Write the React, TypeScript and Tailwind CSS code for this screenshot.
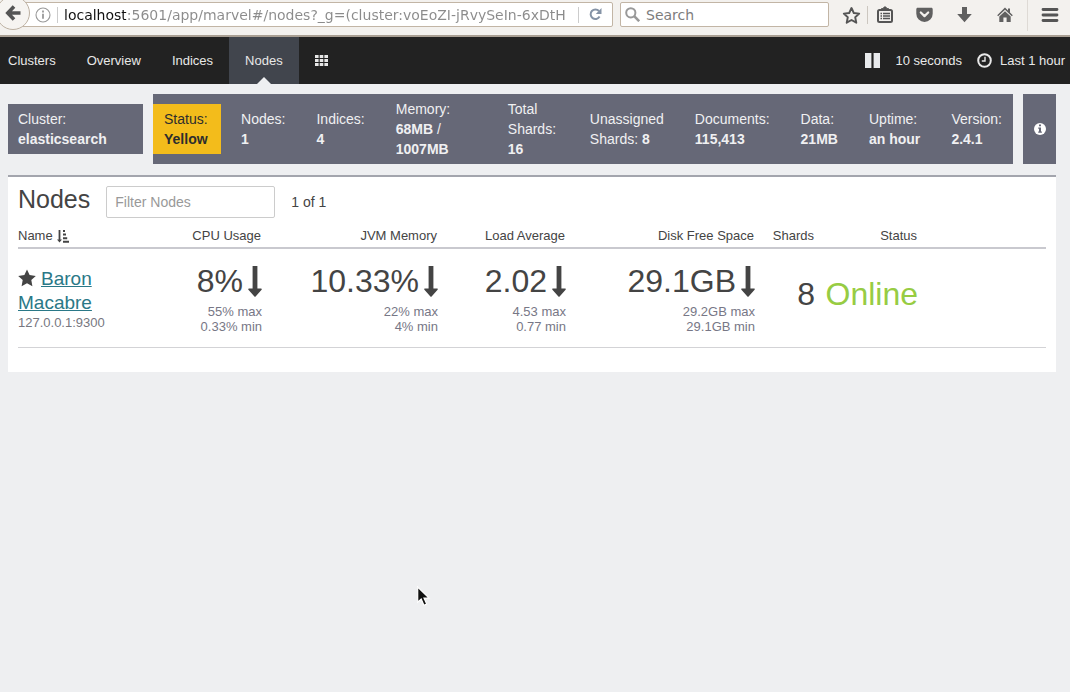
import { useState } from "react";
import type { ReactNode } from "react";

interface Stat {
  name: string;
  lines: ReactNode[];
  width?: string;
}

interface Metric {
  value: string;
  max: string;
  min: string;
}

const stats: Stat[] = [
  { name: "nodes", lines: ["Nodes:", <b>1</b>] },
  { name: "indices", lines: ["Indices:", <b>4</b>] },
  { name: "memory", lines: ["Memory:", <><b>68MB</b> /</>, <b>1007MB</b>], width: "w-[103px]" },
  { name: "total", lines: ["Total", "Shards:", <b>16</b>], width: "w-[73px]" },
  { name: "unassigned", lines: ["Unassigned", <>Shards: <b>8</b></>] },
  { name: "documents", lines: ["Documents:", <b>115,413</b>] },
  { name: "data", lines: ["Data:", <b>21MB</b>] },
  { name: "uptime", lines: ["Uptime:", <b>an hour</b>] },
  { name: "version", lines: ["Version:", <b>2.4.1</b>] },
];

const metrics: Metric[] = [
  { value: "8%", max: "55% max", min: "0.33% min" },
  { value: "10.33%", max: "22% max", min: "4% min" },
  { value: "2.02", max: "4.53 max", min: "0.77 min" },
  { value: "29.1GB", max: "29.2GB max", min: "29.1GB min" },
];

function BrowserBar() {
  const [url, setUrl] = useState("localhost:5601/app/marvel#/nodes?_g=(cluster:voEoZI-jRvySeIn-6xDtH");

  return (
    <div className="flex h-[37px] items-start overflow-hidden border-b-2 border-[#a99f93] bg-[#f3f1ee] font-['DejaVu_Sans',sans-serif] text-sm">
      <button
        aria-label="Back"
        className="relative z-10 -mt-1 -ml-1 flex size-[34px] shrink-0 items-center justify-center rounded-full border border-[#bdb1a2] bg-[#f6f4f1]"
      >
        <svg width="16" height="16" viewBox="0 0 16 16" fill="none" stroke="#555" strokeWidth="3.6">
          <path d="M9 1.5 2.8 8 9 14.5M3 8h12.5" />
        </svg>
      </button>
      <div className="mt-[2px] -ml-2 flex h-[25px] flex-1 items-center rounded-r-xs border border-[#c2b5a5] bg-white pl-3">
        <svg width="16" height="16" viewBox="0 0 16 16" fill="none" stroke="#999" className="shrink-0">
          <circle cx="8" cy="8" r="7" strokeWidth="1.1" />
          <path d="M8 6.8v5M8 3.6v1.8" strokeWidth="1.8" />
        </svg>
        <span className="ml-[6px] h-4 w-px bg-[#ccc]" />
        <input
          aria-label="Address"
          value={url}
          onChange={(e) => setUrl(e.target.value)}
          className="ml-[6px] w-0 min-w-0 flex-1 bg-[linear-gradient(90deg,#111_62px,#8b8b8b_62px)] bg-clip-text text-transparent outline-none"
        />
        <span className="ml-2 h-4 w-px bg-[#ccc]" />
        <button aria-label="Reload" className="mx-[10px] shrink-0">
          <svg width="13" height="13" viewBox="0 0 13 13">
            <path d="M10.6 8.6A4.8 4.8 0 1 1 10 3" fill="none" stroke="#8593a6" strokeWidth="2" />
            <path d="M12.5 0v6H6.8z" fill="#8593a6" />
          </svg>
        </button>
      </div>
      <div className="mt-[2px] ml-[7px] flex h-[25px] w-[209px] items-center rounded-xs border border-[#c2b5a5] bg-white pl-1">
        <svg width="15" height="15" viewBox="0 0 15 15" fill="none" stroke="#999" strokeWidth="2">
          <circle cx="5.8" cy="5.8" r="4.6" />
          <path d="m9.2 9.2 5 5" strokeWidth="2.6" />
        </svg>
        <input aria-label="Search" placeholder="Search" className="ml-[6px] min-w-0 flex-1 outline-none placeholder:text-[#7d7d7d]" />
      </div>
      <div className="flex h-[30px] items-center pl-[13px]">
        <button aria-label="Bookmark">
          <svg width="19" height="19" viewBox="0 0 19 19" fill="none" stroke="#555" strokeWidth="1.9" strokeLinejoin="round">
            <path d="m9.5 2 2.3 5 5.4.6-4 3.7 1.1 5.4-4.8-2.7-4.8 2.7 1.1-5.4-4-3.7 5.4-.6z" />
          </svg>
        </button>
        <span className="ml-[6px] h-[18px] w-px bg-[#ccc7c0]" />
        <button aria-label="Bookmarks list" className="ml-[9px]">
          <svg width="16" height="18" viewBox="0 0 16 18" fill="none" stroke="#555">
            <rect x="1" y="4" width="14" height="12" rx="1.5" strokeWidth="2" />
            <path d="M4.5 4V2.6h2L7 1h2l.5 1.6h2V4z" fill="#555" />
            <path d="M3.5 7.5h1.5M3.5 10h1.5M3.5 12.5h1.5M6 7.5h7M6 10h7M6 12.5h7" strokeWidth="1.3" />
          </svg>
        </button>
        <button aria-label="Pocket" className="ml-[23px]">
          <svg width="17" height="16" viewBox="0 0 17 16">
            <path d="M1.8.8h13.4c1 0 1.5.7 1.5 1.5v4.5a8.2 8.2 0 0 1-16.4 0V2.3C.3 1.5.8.8 1.8.8z" fill="#606060" />
            <path d="m4.8 5.5 3.7 3.6 3.7-3.6" fill="none" stroke="#f3f1ee" strokeWidth="2.2" strokeLinecap="round" strokeLinejoin="round" />
          </svg>
        </button>
        <button aria-label="Downloads" className="ml-6">
          <svg width="15" height="16" viewBox="0 0 15 16" fill="#606060">
            <path d="M5 0h5v7h4.8L7.5 15.2.2 7H5z" />
          </svg>
        </button>
        <button aria-label="Home" className="ml-[25px]">
          <svg width="16" height="16" viewBox="0 0 16 16" fill="#606060">
            <path d="M8 .5 11 3.4V1.5h2v3.9l2.8 2.8-1 1L8 2.7 1.2 9.2l-1-1z" />
            <path d="m8 4.2 5.7 5.4V15H9.6v-4.4H6.4V15H2.3V9.6z" />
          </svg>
        </button>
        <span className="ml-[14px] h-8 w-px bg-[#dedad5]" />
        <button aria-label="Menu" className="mr-[11px] ml-[13px]">
          <svg width="18" height="16" viewBox="0 0 18 16" stroke="#555" strokeWidth="2.8" strokeLinecap="round">
            <path d="M2 2.5h14M2 8h14M2 13.5h14" />
          </svg>
        </button>
      </div>
    </div>
  );
}

function NavBar() {
  return (
    <nav className="flex h-[47px] items-stretch bg-[#222] text-[13px] text-[#e8e8e8]">
      <a href="#clusters" className="flex items-center pr-4 pl-2">Clusters</a>
      <a href="#overview" className="flex items-center pr-4 pl-[15px]">Overview</a>
      <a href="#indices" className="flex items-center pr-4 pl-[15px]">Indices</a>
      <a href="#nodes" className="relative flex items-center bg-[#41454d] px-4">
        Nodes
        <span className="absolute bottom-0 left-1/2 -translate-x-1/2 border-x-[7px] border-b-[7px] border-x-transparent border-b-[#eeeff1]" />
      </a>
      <button aria-label="Applications" className="px-4">
        <svg width="13" height="11" viewBox="0 0 13 11" fill="#e8e8e8">
          <path d="M0 0h3.6v3H0zM4.7 0h3.6v3H4.7zM9.4 0H13v3H9.4zM0 4h3.6v3H0zM4.7 4h3.6v3H4.7zM9.4 4H13v3H9.4zM0 8h3.6v3H0zM4.7 8h3.6v3H4.7zM9.4 8H13v3H9.4z" />
        </svg>
      </button>
      <div className="ml-auto flex items-center pr-[5px]">
        <button aria-label="Pause">
          <svg width="15" height="15" viewBox="0 0 15 15" fill="#e8eaec">
            <path d="M0 0h6.4v15H0zM8.6 0H15v15H8.6z" />
          </svg>
        </button>
        <button className="ml-[15px]">10 seconds</button>
        <button className="ml-[15px] flex items-center gap-2">
          <svg width="15" height="15" viewBox="0 0 15 15" fill="none" stroke="#e8e8e8" strokeWidth="2">
            <circle cx="7.5" cy="7.5" r="6.3" />
            <path d="M8 3.8V8H4.8" strokeWidth="1.4" />
          </svg>
          Last 1 hour
        </button>
      </div>
    </nav>
  );
}

function ClusterStats() {
  return (
    <section className="flex items-center gap-[10px] text-sm leading-5 text-[#f0f0f2]">
      <div className="w-[135px] bg-[#666877] px-[10px] py-[5px]">
        Cluster: <b className="block">elasticsearch</b>
      </div>
      <div className="flex min-h-[70px] flex-1 items-center justify-between bg-[#666877]">
        <div className="w-[68px] bg-[#f3bc1b] py-[5px] pl-[11px] text-[#2d2d2d]">
          Status: <b className="block">Yellow</b>
        </div>
        {stats.map((stat) => (
          <div key={stat.name} className={`px-[11px] py-[5px] whitespace-nowrap ${stat.width ?? ""}`}>
            {stat.lines.map((line, i) => (
              <div key={i}>{line}</div>
            ))}
          </div>
        ))}
      </div>
      <button aria-label="Cluster info" className="flex h-[70px] w-[33px] items-center justify-center bg-[#666877]">
        <svg width="12" height="12" viewBox="0 0 12 12">
          <circle cx="6" cy="6" r="6" fill="#fff" />
          <path d="M5 1.6h2v1.6H5zM4.2 4.4H7v4h.9v1.4H4.2V8.4H5V5.8h-.8z" fill="#666877" />
        </svg>
      </button>
    </section>
  );
}

function DownArrow() {
  return (
    <svg width="14" height="31" viewBox="0 0 14 31" fill="#444">
      <path d="M4.6 0h4.8v22.6H13c.8 0 1 .7.6 1.2l-6 6.7c-.3.4-.8.4-1.2 0l-6-6.7c-.4-.5-.2-1.2.6-1.2h3.6z" />
    </svg>
  );
}

function NodesPanel() {
  const [filter, setFilter] = useState("");

  return (
    <main className="border-t-2 border-[#a3a5ad] bg-white px-[10px] pb-6 text-[#444]">
      <div className="flex h-[50px] items-center text-sm">
        <h1 className="pb-1 text-[25px]">Nodes</h1>
        <input
          aria-label="Filter Nodes"
          placeholder="Filter Nodes"
          value={filter}
          onChange={(e) => setFilter(e.target.value)}
          className="ml-4 h-8 w-[169px] rounded-xs border border-[#ccc] px-2 outline-none placeholder:text-[#999]"
        />
        <span className="ml-4">1 of 1</span>
      </div>
      <table className="w-full table-fixed text-right text-[13px]">
        <colgroup>
          <col className="w-[110px]" />
          <col className="w-[144px]" />
          <col className="w-[176px]" />
          <col className="w-[128px]" />
          <col className="w-[189px]" />
          <col className="w-[60px]" />
          <col className="w-[103px]" />
          <col />
        </colgroup>
        <thead>
          <tr className="h-[21px] border-b-2 border-[#c9c9cf] align-top leading-[18px] *:pr-[11px] *:font-normal">
            <th className="text-left">
              <button className="flex items-center gap-1">
                Name
                <svg width="12" height="13" viewBox="0 0 12 13" fill="#444">
                  <path d="M1.6 0h1.8v9.4H5L2.5 12.6 0 9.4h1.6zM6 0h2v2H6zM6 3.6h3v2H6zM6 7.2h4.2v2H6zM6 10.8h6v2H6z" />
                </svg>
              </button>
            </th>
            <th>CPU Usage</th>
            <th>JVM Memory</th>
            <th>Load Average</th>
            <th>Disk Free Space</th>
            <th>Shards</th>
            <th>Status</th>
            <th />
          </tr>
        </thead>
        <tbody>
          <tr className="h-[99px] border-b border-[#d3d3d6] *:pr-[10px]">
            <td className="pt-[2px] text-left">
              <div className="text-[19px] leading-6">
                <svg width="18" height="18" viewBox="0 0 18 18" fill="#444" className="mr-[5px] inline-block align-[-2px]">
                  <path d="m9 .5 2.6 5.6 6.2.8-4.5 4.2 1.1 6.2L9 14.3l-5.4 3 1.1-6.2L.2 6.9l6.2-.8z" />
                </svg>
                <a href="#baron-macabre" className="text-[#2a7887] underline">Baron Macabre</a>
              </div>
              <div className="leading-[15px] text-[#77777f]">127.0.0.1:9300</div>
            </td>
            {metrics.map((m) => (
              <td key={m.value}>
                <div className="flex h-[42px] items-center justify-end gap-[5px] pb-[3px] text-[32px]">
                  {m.value}
                  <DownArrow />
                </div>
                <div className="leading-[15px] text-[#777786]">{m.max}</div>
                <div className="leading-[15px] text-[#777786]">{m.min}</div>
              </td>
            ))}
            <td className="pb-2 text-[32px]">8</td>
            <td className="pb-2 text-[32px] text-[#97cc43]">Online</td>
            <td />
          </tr>
        </tbody>
      </table>
    </main>
  );
}

export default function App() {
  return (
    <div className="relative min-h-screen bg-[#eeeff1] font-['Liberation_Sans',Arial,sans-serif]">
      <BrowserBar />
      <NavBar />
      <div className="flex flex-col gap-[11px] pt-[10px] pr-[14px] pl-2">
        <ClusterStats />
        <NodesPanel />
      </div>
      {/* mouse pointer */}
      <svg width="14" height="21" viewBox="0 0 14 21" className="pointer-events-none absolute top-[586px] left-[417px]">
        <path d="M.7 1v15.2l3.5-3.2 2.7 6.3 2.8-1.2-2.7-6h5z" fill="#111" stroke="#fff" strokeWidth="1.2" />
      </svg>
    </div>
  );
}
